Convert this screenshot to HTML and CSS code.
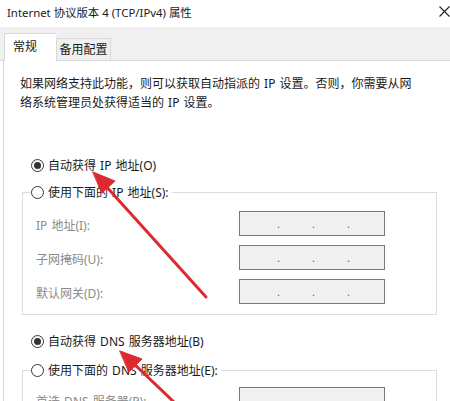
FILE: index.html
```html
<!DOCTYPE html>
<html lang="zh-CN">
<head>
<meta charset="utf-8">
<title>Internet 协议版本 4 (TCP/IPv4) 属性</title>
<link rel="stylesheet" href="styles.css">
</head>
<body>
<div class="window">
  <div class="titlebar">
    <span class="title">Internet 协议版本 4 (TCP/IPv4) 属性</span>
    <svg class="close" width="11" height="11" viewBox="0 0 11 11"><path d="M0.5 0.5 L10.5 10.5 M10.5 0.5 L0.5 10.5" stroke="#222" stroke-width="1.1" fill="none"/></svg>
  </div>
  <div class="tabstrip">
    <div class="tab active">常规</div>
    <div class="tab">备用配置</div>
  </div>
  <div class="panel">
    <p class="intro">如果网络支持此功能，则可以获取自动指派的 IP 设置。否则，你需要从网络系统管理员处获得适当的 IP 设置。</p>

    <div class="radio-row first"><span class="radio checked"></span><span>自动获得 IP 地址(O)</span></div>
    <div class="group">
      <div class="legend"><span class="radio"></span><span>使用下面的 IP 地址(S):</span></div>
      <div class="field first-field"><span class="label">IP 地址(I):</span><span class="ip"><i>.</i><i>.</i><i>.</i></span></div>
      <div class="field"><span class="label">子网掩码(U):</span><span class="ip"><i>.</i><i>.</i><i>.</i></span></div>
      <div class="field"><span class="label">默认网关(D):</span><span class="ip"><i>.</i><i>.</i><i>.</i></span></div>
    </div>

    <div class="radio-row dns"><span class="radio checked"></span><span>自动获得 DNS 服务器地址(B)</span></div>
    <div class="group dns-group">
      <div class="legend"><span class="radio"></span><span>使用下面的 DNS 服务器地址(E):</span></div>
      <div class="field first-field dns-field"><span class="label">首选 DNS 服务器(P):</span><span class="ip"><i>.</i><i>.</i><i>.</i></span></div>
    </div>
  </div>

  <svg class="arrows" width="450" height="401" viewBox="0 0 450 401">
    <g stroke="#dc2a2f" stroke-width="3" fill="#dc2a2f" stroke-linecap="round">
      <line x1="206" y1="297" x2="104" y2="184"/>
      <polygon points="93,172 115,181 102,193" stroke-width="1"/>
      <line x1="176" y1="404" x2="132" y2="362"/>
      <polygon points="120,351 142,359 129,372" stroke-width="1"/>
    </g>
  </svg>
</div>
</body>
</html>
```

FILE: styles.css
```css
* { box-sizing: border-box; }
html, body { margin: 0; padding: 0; background: #fff; }
body {
  font-family: "Noto Sans", "Noto Sans CJK SC", sans-serif;
  font-size: 12px;
  color: #1a1a1a;
  word-spacing: 1px;
}
.window {
  width: 450px;
  height: 401px;
  overflow: hidden;
  position: relative;
  background: #fff;
}
.titlebar {
  height: 27px;
  display: flex;
  align-items: center;
  justify-content: space-between;
  padding: 0 0 1px 7px;
  background: #fff;
}
.title { line-height: 20px; white-space: nowrap; word-spacing: 0; font-size: 11.4px; }
.close { margin-right: 0; margin-top: -4px; flex: none; }
.tabstrip {
  height: 34px;
  background: #f0f0f0;
  display: flex;
  align-items: flex-end;
  padding-left: 4px;
  border-bottom: 1px solid #d9d9d9;
}
.tab {
  height: 22px;
  width: 55px;
  border: 1px solid #d9d9d9;
  border-bottom: none;
  background: #f0f0f0;
  display: flex;
  align-items: center;
  justify-content: center;
  line-height: 18px;
  padding-top: 1px;
}
.tab.active {
  width: 52px;
  height: 28px;
  background: #fff;
  margin-bottom: -1px;
  border-right: none;
  padding-bottom: 3px;
  justify-content: flex-start;
  padding-left: 8px;
}
.panel {
  margin-left: 3px;
  border-left: 1px solid #d9d9d9;
  height: 340px;
  padding-top: 13px;
  background: #fff;
}
.intro {
  margin: 0 0 0 16px;
  width: 397px;
  line-height: 19px;
  word-spacing: 1px;
}
.radio-row, .legend {
  display: flex;
  align-items: center;
  height: 20px;
  white-space: nowrap;
}
.radio-row.first { margin: 43px 0 0 27px; }
.radio-row.dns { margin: 16px 0 0 27px; }
.radio {
  width: 13px;
  height: 13px;
  border: 1px solid #333;
  border-radius: 50%;
  margin-right: 4px;
  display: flex;
  align-items: center;
  justify-content: center;
  flex: none;
}
.radio.checked::after {
  content: "";
  width: 7px;
  height: 7px;
  border-radius: 50%;
  background: #333;
}
.group {
  margin: 17px 0 0 18px;
  width: 415px;
  border: 1px solid #dcdcdc;
  padding-bottom: 10px;
}
.dns-group { margin-top: 19px; }
.legend {
  width: max-content;
  margin: -11px 0 0 8px;
  background: #fff;
  padding-right: 3px;
}
.field {
  display: flex;
  align-items: center;
  height: 25px;
  margin-top: 9px;
  padding-left: 13px;
}
.field.first-field { margin-top: 9px; }
.field.dns-field { margin-top: 7px; }
.label {
  width: 203px;
  color: #8a8a8a;
  white-space: nowrap;
  padding-top: 2px;
}
.ip {
  width: 146px;
  height: 25px;
  border: 1px solid #7a7a7a;
  background: #f0f0f0;
  display: flex;
  align-items: center;
  padding-left: 37px;
}
.ip i {
  font-style: normal;
  width: 35px;
  color: #666;
  font-size: 11px;
  line-height: 10px;
}
.arrows {
  position: absolute;
  left: 0;
  top: 0;
  pointer-events: none;
}
```
